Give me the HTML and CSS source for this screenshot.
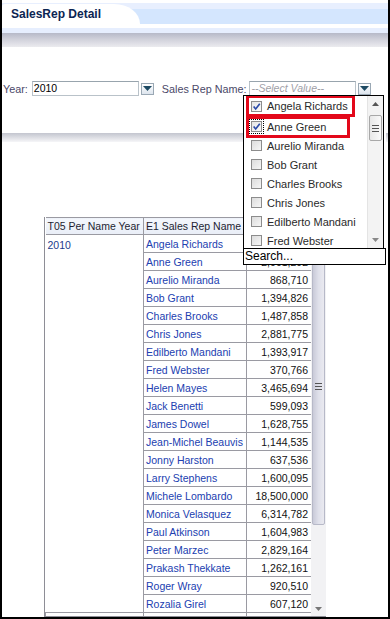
FILE: index.html
```html
<!DOCTYPE html>
<html lang="en">
<head>
    <meta charset="UTF-8">
    <meta name="viewport" content="width=device-width, initial-scale=1.0">
    <title>SalesRep Detail</title>
    <link rel="stylesheet" href="styles.css">
</head>
<body>
    <div class="frame">
        <div class="tabbar">
            <div class="tab">SalesRep Detail</div>
        </div>
        <div class="tabline"></div>

        <div class="filters">
            <label class="flabel">Year:</label>
            <div class="combo combo-year">2010</div>
            <span class="dropbtn"><svg width="9" height="5" viewBox="0 0 9 5"><path d="M0 0 H9 L4.5 5 Z" fill="#1d4a63"/></svg></span>
            <label class="flabel rep-label">Sales Rep Name:</label>
            <div class="combo combo-rep placeholder">--Select Value--</div>
            <span class="dropbtn"><svg width="9" height="5" viewBox="0 0 9 5"><path d="M0 0 H9 L4.5 5 Z" fill="#1d4a63"/></svg></span>
        </div>

        <div class="sep"></div>

        <div class="grid">
            <div class="grid-body">
                <table>
                    <colgroup>
                        <col class="c-year">
                        <col class="c-name">
                        <col class="c-val">
                    </colgroup>
                    <tr class="head">
                        <th>T05 Per Name Year</th>
                        <th>E1 Sales Rep Name</th>
                        <th>Revenue</th>
                    </tr>
                    <tr><td class="year" rowspan="21">2010</td><td class="name">Angela Richards</td><td class="val">1,983,475</td></tr>
                    <tr><td class="name">Anne Green</td><td class="val">2,001,292</td></tr>
                    <tr><td class="name">Aurelio Miranda</td><td class="val">868,710</td></tr>
                    <tr><td class="name">Bob Grant</td><td class="val">1,394,826</td></tr>
                    <tr><td class="name">Charles Brooks</td><td class="val">1,487,858</td></tr>
                    <tr><td class="name">Chris Jones</td><td class="val">2,881,775</td></tr>
                    <tr><td class="name">Edilberto Mandani</td><td class="val">1,393,917</td></tr>
                    <tr><td class="name">Fred Webster</td><td class="val">370,766</td></tr>
                    <tr><td class="name">Helen Mayes</td><td class="val">3,465,694</td></tr>
                    <tr><td class="name">Jack Benetti</td><td class="val">599,093</td></tr>
                    <tr><td class="name">James Dowel</td><td class="val">1,628,755</td></tr>
                    <tr><td class="name">Jean-Michel Beauvis</td><td class="val">1,144,535</td></tr>
                    <tr><td class="name">Jonny Harston</td><td class="val">637,536</td></tr>
                    <tr><td class="name">Larry Stephens</td><td class="val">1,600,095</td></tr>
                    <tr><td class="name">Michele Lombardo</td><td class="val">18,500,000</td></tr>
                    <tr><td class="name">Monica Velasquez</td><td class="val">6,314,782</td></tr>
                    <tr><td class="name">Paul Atkinson</td><td class="val">1,604,983</td></tr>
                    <tr><td class="name">Peter Marzec</td><td class="val">2,829,164</td></tr>
                    <tr><td class="name">Prakash Thekkate</td><td class="val">1,262,161</td></tr>
                    <tr><td class="name">Roger Wray</td><td class="val">920,510</td></tr>
                    <tr><td class="name">Rozalia Girel</td><td class="val">607,120</td></tr>
                    <tr><td></td><td class="name"></td><td class="val"></td></tr>
                </table>
            </div>
            <div class="vscroll">
                <div class="arrow"><svg width="7" height="4" viewBox="0 0 7 4"><path d="M0 4 H7 L3.5 0 Z" fill="#777"/></svg></div>
                <div class="thumb"><span class="grip"></span></div>
                <div class="track"></div>
                <div class="arrow"><svg width="7" height="4" viewBox="0 0 7 4"><path d="M0 0 H7 L3.5 4 Z" fill="#777"/></svg></div>
            </div>
        </div>

        <!-- open multi-select popup for Sales Rep Name -->
        <div class="popup">
            <div class="plist">
                <div class="items">
                    <div class="item"><span class="hl hl-1"><span class="cb checked"><svg width="11" height="11" viewBox="0 0 11 11"><path d="M2 5.5 L4.5 8.5 L9.5 2" fill="none" stroke="#2a4aa8" stroke-width="2"/></svg></span>Angela Richards</span></div>
                    <div class="item"><span class="hl hl-2"><span class="cb checked focus"><svg width="11" height="11" viewBox="0 0 11 11"><path d="M2 5.5 L4.5 8.5 L9.5 2" fill="none" stroke="#2a4aa8" stroke-width="2"/></svg></span>Anne Green</span></div>
                    <div class="item"><span class="cb"></span>Aurelio Miranda</div>
                    <div class="item"><span class="cb"></span>Bob Grant</div>
                    <div class="item"><span class="cb"></span>Charles Brooks</div>
                    <div class="item"><span class="cb"></span>Chris Jones</div>
                    <div class="item"><span class="cb"></span>Edilberto Mandani</div>
                    <div class="item"><span class="cb"></span>Fred Webster</div>
                </div>
                <div class="pscroll">
                    <div class="arrow"><svg width="7" height="4" viewBox="0 0 7 4"><path d="M0 4 H7 L3.5 0 Z" fill="#555"/></svg></div>
                    <div class="pthumb"><span class="grip"></span></div>
                    <div class="ptrack"></div>
                    <div class="arrow"><svg width="7" height="4" viewBox="0 0 7 4"><path d="M0 0 H7 L3.5 4 Z" fill="#888"/></svg></div>
                </div>
            </div>
            <div class="search">Search...</div>
        </div>
    </div>
</body>
</html>
```

FILE: styles.css
```css
* {
    box-sizing: border-box;
}
body {
    margin: 0;
    font-family: "Liberation Sans", Arial, sans-serif;
    font-size: 10.5px;
    color: #222;
    background: #fff;
}
.frame {
    position: relative;
    width: 390px;
    height: 619px;
    border: 2px solid #000;
    border-top: none;
    overflow: hidden;
}
.tabbar {
    height: 24px;
    padding-top: 4px;
    background: linear-gradient(#ffffff 0, #ffffff 3px, #e8effe 3px, #e8effe 9px, #d4e6fe 9px);
}
.tab {
    width: 138px;
    height: 20px;
    padding: 3px 0 0 9px;
    background: #fff;
    border-radius: 3px 26px 0 0 / 3px 20px 0 0;
    font-size: 12px;
    font-weight: bold;
    color: #0c2552;
}
.tabline {
    height: 23px;
    background: linear-gradient(#ffffff 0, #ffffff 4px, #e6eefe 4px, #e6eefe 9px, #b6b9c8 9px, #cfd0da 15px, #ebebef 23px);
}
.filters {
    display: flex;
    align-items: center;
    height: 15px;
    margin-top: 34px;
    padding-left: 1px;
}
.flabel {
    color: #4a4868;
    margin-right: 3px;
    font-size: 10.8px;
}
.rep-label {
    margin-left: 8px;
}
.combo {
    height: 15px;
    padding: 0 1px;
    border: 1px solid #b9c2c9;
    border-top-color: #98a4ad;
    line-height: 13px;
    color: #000;
}
.combo-year {
    width: 107px;
    margin-left: 1px;
}
.combo-rep {
    width: 107px;
}
.placeholder {
    color: #a0a0a8;
    font-style: italic;
}
.dropbtn {
    display: flex;
    align-items: center;
    justify-content: center;
    width: 13px;
    height: 12px;
    margin-left: 2px;
    border: 1px solid #9aa8b4;
    background: linear-gradient(#ffffff, #dde5ee);
}
.sep {
    height: 9px;
    margin-top: 37px;
    background: linear-gradient(#c3c5cf, #f6f6f8);
}
.grid {
    display: flex;
    width: 282px;
    height: 400px;
    margin: 75px 0 0 42px;
    border-left: 1px solid #8e8e96;
    border-bottom: 1px solid #8e8e96;
    overflow: hidden;
}
.grid-body {
    width: 266px;
    overflow: hidden;
}
table {
    width: 266px;
    border-collapse: collapse;
    table-layout: fixed;
}
.c-year {
    width: 98px;
}
.c-name {
    width: 103px;
}
.c-val {
    width: 65px;
}
th, td {
    height: 18px;
    padding: 0 3px 0 2px;
    border: 1px solid #9a9aa2;
    white-space: nowrap;
    overflow: hidden;
    text-align: left;
    font-weight: normal;
}
table tr:first-child th {
    border-left: none;
}
.head th {
    height: 17px;
    background: linear-gradient(#f4f7fc, #e9eef7);
    color: #1e1e32;
}
td.year {
    vertical-align: top;
    padding-top: 4px;
    color: #1b3a8c;
    border-left: none;
}
td.name {
    color: #2140b0;
}
td.val {
    text-align: right;
    color: #111;
}
.vscroll {
    display: flex;
    flex-direction: column;
    width: 15px;
    background: #f2f2f4;
}
.vscroll .arrow {
    display: flex;
    align-items: center;
    justify-content: center;
    height: 14px;
}
.vscroll .thumb {
    height: 278px;
    margin: 16px 1px 0;
    display: flex;
    align-items: center;
    justify-content: center;
    border: 1px solid #b7b9c8;
    border-radius: 2px;
    background: linear-gradient(90deg, #c9cad8, #dfe0ea 50%, #eaeaf0);
}
.vscroll .track {
    flex: 1;
}
.grip {
    display: block;
    width: 7px;
    height: 7px;
    background: repeating-linear-gradient(#555 0, #555 1px, transparent 1px, transparent 3px);
}
.popup {
    position: absolute;
    left: 241px;
    top: 95px;
    width: 143px;
    background: #fff;
}
.plist {
    display: flex;
    width: 141px;
    height: 153px;
    border: 1px solid #000;
    border-bottom: none;
    overflow: hidden;
}
.items {
    flex: 1;
    padding-top: 2px;
}
.item {
    display: flex;
    align-items: center;
    height: 19px;
    padding-left: 7px;
    font-size: 11px;
    color: #2a2a2a;
}
.hl {
    display: inline-flex;
    align-items: center;
    outline: 3px solid #e3081a;
    outline-offset: 2px;
}
.hl-1 {
    padding-right: 2px;
    margin-top: -3px;
}
.hl-2 {
    padding-right: 19px;
}
.cb {
    display: flex;
    align-items: center;
    justify-content: center;
    width: 11px;
    height: 11px;
    margin-right: 5px;
    border: 1px solid #8c8c8c;
    background: linear-gradient(135deg, #dcdcdc, #f6f6f6);
}
.cb.checked {
    background: linear-gradient(135deg, #e4e4e4, #fbfbfb);
}
.cb.focus {
    outline: 1px dotted #000;
    outline-offset: 1px;
}
.pscroll {
    display: flex;
    flex-direction: column;
    width: 16px;
    background: #f3f3f3;
    border-left: 1px solid #e4e4e4;
}
.pscroll .arrow {
    display: flex;
    align-items: center;
    justify-content: center;
    height: 16px;
}
.pthumb {
    height: 26px;
    margin: 3px 1px 0;
    display: flex;
    align-items: center;
    justify-content: center;
    border: 1px solid #a8a8a8;
    border-radius: 2px;
    background: linear-gradient(90deg, #e8e8e8, #fafafa);
}
.ptrack {
    flex: 1;
}
.search {
    height: 17px;
    border: 1px solid #000;
    padding-left: 1px;
    font-size: 12px;
    line-height: 15px;
    color: #000;
    background: #fff;
}
```
